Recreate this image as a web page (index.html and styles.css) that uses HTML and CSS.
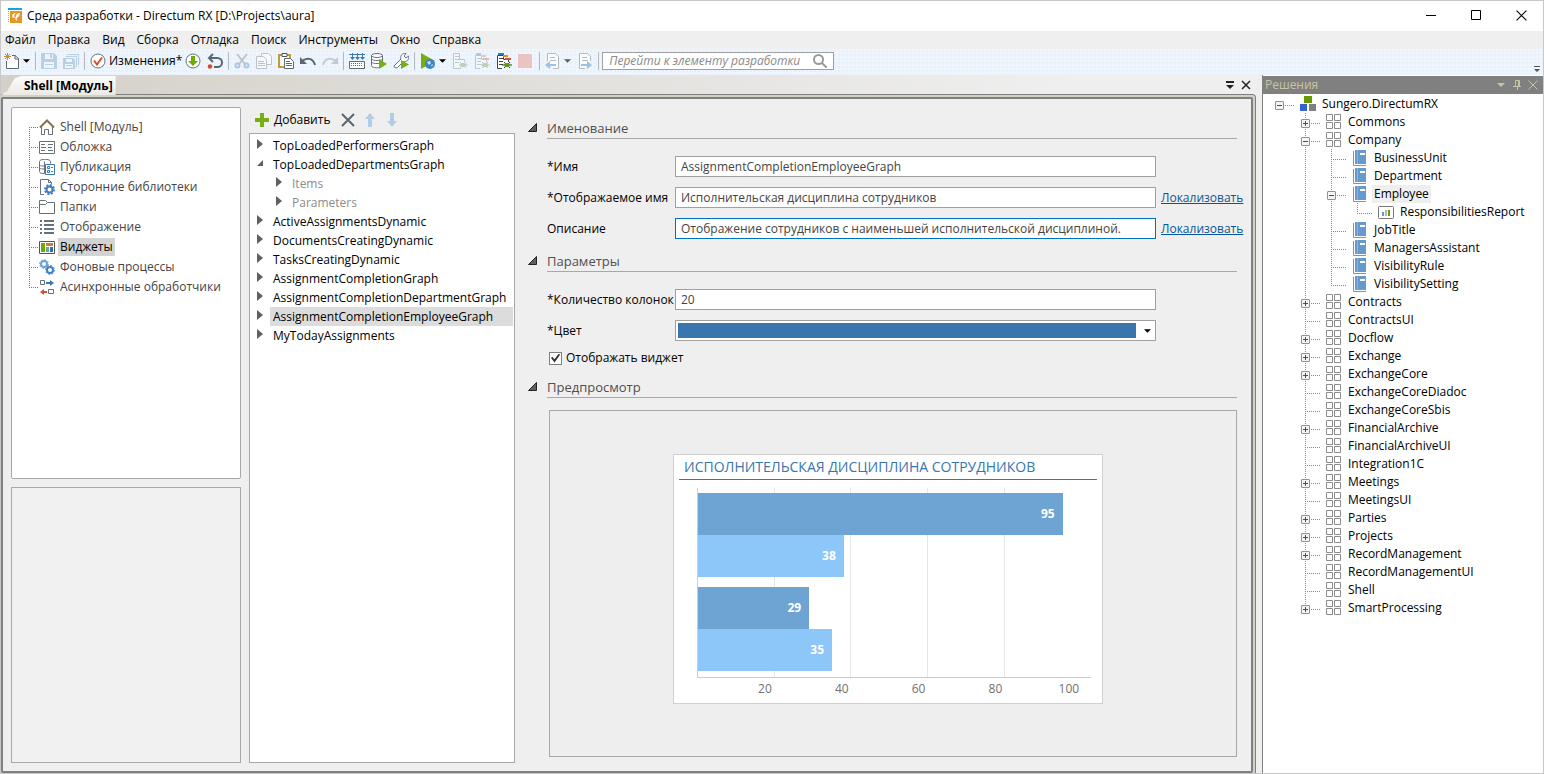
FILE: index.html
```html
<!DOCTYPE html>
<html lang="ru">
<head>
    <meta charset="utf-8">
    <title>Среда разработки - Directum RX</title>
    <link rel="stylesheet" href="styles.css">
</head>
<body>
    <!-- Shared icons -->
    <svg class="sprite" aria-hidden="true">
        <symbol id="module" viewBox="0 0 16 16"><g fill="none" stroke="#8c8c8c"><path d="M.5.5h6v6h-6zM8.500.5h6v6h-6zM.5 8.500h6v6h-6zM8.500 8.500h6v6h-6z"/></g></symbol>
        <symbol id="entity" viewBox="0 0 16 16"><path d="M3 0h11v14H3z" fill="#6699cc"/><path d="M5 0h1v14H5z" fill="#8db4da"/><path d="M8 3h5v2H8z" fill="#fff"/><path d="M1.500 1v14.500H14" fill="none" stroke="#6699cc"/></symbol>
        <symbol id="report" viewBox="0 0 16 16"><rect x=".5" y="2.500" width="15" height="12" rx="1" fill="#fff" stroke="#777"/><path d="M4 8h2v4H4z" fill="#6699cc"/><path d="M7 6h2v6H7z" fill="#b5b5b5"/><path d="M10 6h2v6h-2z" fill="#690"/></symbol>
        <symbol id="caret" viewBox="0 0 8 4"><path d="M0 0h8L4 4z"/></symbol>
        <symbol id="closed" viewBox="0 0 6 10"><path d="M0 0l6 5-6 5z" fill="#606060"/></symbol>
        <symbol id="opened" viewBox="0 0 9 9"><path d="M8.500.5v8h-8z" fill="#606060" stroke="#222"/></symbol>
        <symbol id="opened-small" viewBox="0 0 6 10"><path d="M6 2v6H0z" fill="#606060"/></symbol>
        <symbol id="close" viewBox="0 0 10 10"><path d="M.5.5l9 9M9.500.5l-9 9" fill="none" stroke="currentColor"/></symbol>
    </svg>

    <header class="titlebar">
        <svg class="logo" viewBox="0 0 16 16"><path d="M1 0h14v2H1z" fill="#1ba1e2"/><path d="M3 3h12v12H3z" fill="#e8961e"/><path d="M1.500 3v12" stroke="#aaa" stroke-dasharray="1 1"/><path d="M5 8c0-2 2-3 4-3-2 1-2 3-1 5-2 0-3-1-3-2z" fill="#fff"/><path d="M9 8c0-2 2-3 4-3-1 2 0 3-2 4s-1 3-1 4c-2-1-2-3-1-5z" fill="#fff"/></svg>
        <span class="title">Среда разработки - Directum RX [D:\Projects\aura]</span>
        <div class="window-buttons">
            <button aria-label="Свернуть"><svg viewBox="0 0 11 11"><path d="M0 5.500h10" stroke="#000"/></svg></button>
            <button aria-label="Развернуть"><svg viewBox="0 0 11 11"><path d="M.5.5h9v9h-9z" fill="none" stroke="#000"/></svg></button>
            <button aria-label="Закрыть"><svg viewBox="0 0 10 10"><use href="#close"/></svg></button>
        </div>
    </header>

    <nav class="menu">
        <button>Файл</button>
        <button>Правка</button>
        <button>Вид</button>
        <button>Сборка</button>
        <button>Отладка</button>
        <button>Поиск</button>
        <button>Инструменты</button>
        <button>Окно</button>
        <button>Справка</button>
    </nav>

    <div class="toolbar">
        <button class="with-caret" aria-label="Создать">
            <svg class="icon" viewBox="0 0 16 16"><path d="M2.500 8v7.500h12v-10L11 2.500H8" fill="#fff" stroke="#606870"/><path d="M11 2v4h4" fill="none" stroke="#606870"/><path d="M3.500 0v7M0 3.500h7M1 1l5 5M6 1L1 6" stroke="#c88a3c"/></svg>
            <svg class="caret"><use href="#caret"/></svg>
        </button>
        <i class="sep"></i>
        <button class="pale" aria-label="Сохранить"><svg class="icon" viewBox="0 0 16 16"><path d="M0 0h13l3 3v13H0z" fill="#acc6df"/><path d="M4 1h8v5H4zM3 9h10v6H3z" fill="#eef5fd"/><path d="M9 1h2v4H9zM4 11h8v1H4z" fill="#acc6df"/></svg></button>
        <button class="pale" aria-label="Сохранить все"><svg class="icon" viewBox="0 0 16 16"><path d="M4 1.500h11.500V12M2.500 3.500h11V14" fill="none" stroke="#acc6df"/><path d="M0 5h10l2 2v9H0z" fill="#acc6df"/><path d="M3 6h6v3H3zM2 11h8v4H2z" fill="#eef5fd"/><path d="M3 12h6v1H3z" fill="#acc6df"/></svg></button>
        <i class="sep"></i>
        <button class="with-text">
            <svg class="icon" viewBox="0 0 16 16"><circle cx="8" cy="8" r="7" fill="#fff" stroke="#68717a"/><path d="M4 7.500l3 4 5-7" fill="none" stroke="#d2512e" stroke-width="2"/></svg>
            Изменения*
        </button>
        <button aria-label="Получить"><svg class="icon" viewBox="0 0 16 16"><circle cx="8" cy="8" r="7" fill="#fff" stroke="#68717a"/><path d="M6 3h4v5h3l-5 5-5-5h3z" fill="#6cae00"/></svg></button>
        <button aria-label="Отменить изменения"><svg class="icon" viewBox="0 0 16 16"><path d="M2 5h8.500a4.500 4.500 0 010 9H7M6 1L2 5l4 4" fill="none" stroke="#5b6670" stroke-width="2"/><circle cx="3" cy="13.500" r="2.200" fill="#d9482b"/></svg></button>
        <i class="sep"></i>
        <button aria-label="Вырезать"><svg class="icon" viewBox="0 0 16 16"><path d="M3 1l8 10M13 1L5 11" fill="none" stroke="#bcc3c9" stroke-width="2"/><g fill="none" stroke="#acc6df" stroke-width="2"><circle cx="3.500" cy="12.500" r="2"/><circle cx="12.500" cy="12.500" r="2"/></g></svg></button>
        <button aria-label="Копировать"><svg class="icon" viewBox="0 0 16 16"><g fill="#f6f9fd" stroke="#bcc3c9"><path d="M5.500.5h7l3 3v8h-10z"/><path d="M.5 3.500h7l3 3v9H.5zM2 8.500h6M2 10.500h7M2 12.500h7"/></g></svg></button>
        <button aria-label="Вставить"><svg class="icon" viewBox="0 0 16 16"><path d="M1 2h11v12H1z" fill="#fff" stroke="#c39a34" stroke-width="2"/><path d="M4 .5h5v3H4z" fill="#fff" stroke="#555"/><path d="M6.500 5.500h6l3 3v7h-9z" fill="#fff" stroke="#606870"/><path d="M8 8.500h4M8 10.500h6M8 12.500h6" stroke="#606870"/></svg></button>
        <button aria-label="Отменить"><svg class="icon" viewBox="0 0 16 16"><path d="M2 8c5-4 11-3 13 4" fill="none" stroke="#5b6670" stroke-width="2"/><path d="M0 4v7h7z" fill="#5b6670"/></svg></button>
        <button aria-label="Повторить"><svg class="icon" viewBox="0 0 16 16"><path d="M14 8C9 4 3 5 1 12" fill="none" stroke="#c3c9cf" stroke-width="2"/><path d="M16 4v7H9z" fill="#c3c9cf"/></svg></button>
        <i class="sep"></i>
        <button aria-label="Собрать"><svg class="icon" viewBox="0 0 16 16"><path d="M3.500 0v5M8.500 0v5M13.500 0v5M0 1.500h16" stroke="#3a78b4"/><path d="M1 4h5L3.500 7zM6 4h5L8.500 7zM11 4h5l-2.500 3z" fill="#3a78b4"/><path d="M.5 8.500h15v7H.5z" fill="#fff" stroke="#606870"/><path d="M2 10.500h12M2 12.500h12" stroke="#606870" stroke-dasharray="1 1"/></svg></button>
        <button aria-label="Обновить базу"><svg class="icon" viewBox="0 0 16 16"><g fill="#fff" stroke="#68717a"><path d="M.5 2.500v10c0 3 10 3 11 0v-10"/><ellipse cx="6" cy="2.500" rx="5.500" ry="2"/><path d="M.5 6c1 2 10 2 11 0M.5 9c1 2 10 2 11 0" fill="none"/></g><path d="M8 6l8 5-8 5z" fill="#76ae14"/></svg></button>
        <button aria-label="Обслуживание"><svg class="icon" viewBox="0 0 16 16"><path d="M1 13l7-7c-1-3 1-6 5-5.500L11 3l2 2 2.500-2c1 4-2 6-5 5.500l-6 6c-2 1-4-.5-3.500-1.500z" fill="#fff" stroke="#68717a"/><path d="M8 7l8 4.500L8 16z" fill="#76ae14"/></svg></button>
        <i class="sep"></i>
        <button class="with-caret" aria-label="Запустить">
            <svg class="icon" viewBox="0 0 16 16"><path d="M1 0l14 8-14 8z" fill="#76ae14"/><circle cx="10" cy="11" r="5" fill="#3d84c6"/><path d="M7 9l3-1 1 2-2 2zM11 12l2-1-1 3z" fill="#cfe4f5"/></svg>
            <svg class="caret"><use href="#caret"/></svg>
        </button>
        <button class="faded" aria-label="Отладка"><svg class="icon" viewBox="0 0 16 16"><path d="M9 15.500H1.500V.5h6v6h5V9" fill="#fff" stroke="#68717a"/><path d="M3 3.500h4M3 6.500h4M3 9.500h4" stroke="#68717a"/><path d="M8 9l6 6M14 9l-6 6M7 12h9" stroke="#5c8c3c"/><ellipse cx="11" cy="12" rx="3" ry="2" fill="#5c8c3c"/></svg></button>
        <button class="faded" aria-label="Отладка службы"><svg class="icon" viewBox="0 0 16 16"><path d="M6 15.500H1.500V2.500h6v4h5V9" fill="#fff" stroke="#68717a"/><path d="M3 5.500h4M3 8.500h4M3 11.500h4" stroke="#68717a"/><path d="M2 0h5v2H2z" fill="#3a78b4"/><path d="M7 2h5v2H7z" fill="#e88b1c"/><path d="M9 5h6v2H9z" fill="#d2512e"/><path d="M8 9l6 6M14 9l-6 6M7 12h9" stroke="#5c8c3c"/><ellipse cx="11" cy="12" rx="3" ry="2" fill="#5c8c3c"/></svg></button>
        <button aria-label="Подключить отладчик"><svg class="icon" viewBox="0 0 16 16"><path d="M6 15.500H1.500V2.500h6v4h5V9" fill="#fff" stroke="#444"/><path d="M3 5.500h4M3 8.500h4M3 11.500h4" stroke="#444"/><path d="M2 0h6v2H2z" fill="#3a78b4"/><path d="M7 2h5v2H7z" fill="#e88b1c"/><path d="M9 5h6v2H9z" fill="#d2512e"/><path d="M8 9l6 6M14 9l-6 6M6 12h10" stroke="#2f3f22"/><ellipse cx="11" cy="12" rx="3" ry="2" fill="#5c9c1c"/></svg></button>
        <button aria-label="Остановить"><svg class="icon" viewBox="0 0 16 16"><path d="M0 1h14v14H0z" fill="#e9c4c1"/></svg></button>
        <i class="sep"></i>
        <button class="with-caret dim" aria-label="Назад">
            <svg class="icon pale" viewBox="0 0 16 16"><path d="M2.500 8V.5h8l3 3v12H8M5 4.500h5M5 7.500h6" fill="#fff" stroke="#a5abb1"/><path d="M0 12l5-4v3h6v2H5v3z" fill="#91b4d8"/></svg>
            <svg class="caret"><use href="#caret"/></svg>
        </button>
        <button aria-label="Вперед"><svg class="icon pale" viewBox="0 0 16 16"><path d="M8 15.500H2.500V.5h8l3 3V8M5 4.500h5M5 7.500h6" fill="#fff" stroke="#a5abb1"/><path d="M15 12l-5-4v3H4v2h6v3z" fill="#91b4d8"/></svg></button>
        <i class="sep"></i>
        <label class="search">
            <input type="text" placeholder="Перейти к элементу разработки" aria-label="Перейти к элементу разработки">
            <svg viewBox="0 0 14 14"><circle cx="5.500" cy="5.500" r="4.500" fill="none" stroke="#9a9a9a" stroke-width="2"/><path d="M9 9l5 5" stroke="#9a9a9a" stroke-width="2"/></svg>
        </label>
        <svg class="overflow" viewBox="0 0 6 7"><path d="M0 0h6v1H0zM0 3h6L3 6z" fill="#555"/></svg>
    </div>

    <div class="workspace">
        <section class="document">
            <div class="tabs">
                <button class="tab">Shell [Модуль]</button>
                <div class="tab-buttons">
                    <button aria-label="Список окон"><svg viewBox="0 0 10 10"><path d="M1 1h8v2H1zM1 5h8L5 9z" fill="#222"/></svg></button>
                    <button aria-label="Закрыть"><svg viewBox="0 0 10 10"><path d="M1 1l8 8M9 1L1 9" stroke="#222" stroke-width="1.500"/></svg></button>
                </div>
            </div>
            <div class="frame">
                <div class="editor">
                    <div class="side">
                        <div class="box nav-box">
                            <ul class="nav-tree">
                                <li><svg class="icon" viewBox="0 0 16 16"><path d="M2.500 8v7.500h3v-5h4v5h4V8" fill="#fff" stroke="#68717a"/><path d="M1 8.500l7-7 7 7" fill="none" stroke="#86704a" stroke-width="2"/></svg><a href="#">Shell [Модуль]</a></li>
                                <li><svg class="icon" viewBox="0 0 16 16"><path d="M.5 2.500h15v12H.5z" fill="#fff" stroke="#68717a"/><path d="M2 5.500h4M2 8.500h5M2 11.500h4M9 5.500h5M9 8.500h4M9 11.500h5" stroke="#68717a"/></svg><a href="#">Обложка</a></li>
                                <li><svg class="icon" viewBox="0 0 16 16"><path d="M.5 2.500v10c0 2 3 2 5 2V2.500M.5 6c1 1 3 1 5 1M.5 9c1 1 3 1 5 1M.5 2.500c0-3 11-3 11 0v2" fill="none" stroke="#68717a"/><path d="M6.500 5.500h9v10h-9z" fill="#fff" stroke="#3a78b4"/><path d="M8.500 7.500h2v2h-2zM8.500 11.500h2v2h-2zM12 8.500h2M12 12.500h2" fill="none" stroke="#3a78b4"/></svg><a href="#">Публикация</a></li>
                                <li><svg class="icon" viewBox="0 0 16 16"><path d="M5 15.500H1.500V.5h8l3 3V5M9.500.5v3h3" fill="#fff" stroke="#68717a"/><circle cx="10.500" cy="10.500" r="4.500" fill="none" stroke="#3d7fc0" stroke-width="2" stroke-dasharray="2 1.500"/><circle cx="10.500" cy="10.500" r="3" fill="none" stroke="#3d7fc0" stroke-width="2"/></svg><a href="#">Сторонние библиотеки</a></li>
                                <li><svg class="icon" viewBox="0 0 16 16"><path d="M.5 14.500v-13h6l2 2h7v11zM.5 5.500h6l2-2" fill="#fff" stroke="#68717a"/></svg><a href="#">Папки</a></li>
                                <li><svg class="icon" viewBox="0 0 16 16"><path d="M1 2h2M1 6h2M1 10h2M1 14h2M5 2h10M5 6h10M5 10h10M5 14h10" stroke="#68717a" stroke-width="2"/></svg><a href="#">Отображение</a></li>
                                <li><svg class="icon" viewBox="0 0 16 16"><path d="M.5 2.500h15v12H.5z" fill="#fff" stroke="#555"/><path d="M2 4h4v9H2z" fill="#6cae00"/><path d="M7 4h7v3H7z" fill="#ce7f2e"/><path d="M7 8h3v5H7z" fill="#6aa5a0"/><path d="M11 8h3v5h-3z" fill="#2e6fae"/></svg><a href="#" class="selected">Виджеты</a></li>
                                <li><svg class="icon" viewBox="0 0 16 16"><circle cx="5" cy="5" r="3" fill="none" stroke="#6aa2d8" stroke-width="2"/><circle cx="5" cy="5" r="4.500" fill="none" stroke="#6aa2d8" stroke-dasharray="1.500 2"/><circle cx="11" cy="11" r="3" fill="none" stroke="#3d7fc0" stroke-width="2"/><circle cx="11" cy="11" r="4.500" fill="none" stroke="#3d7fc0" stroke-dasharray="1.500 2"/></svg><a href="#">Фоновые процессы</a></li>
                                <li><svg class="icon" viewBox="0 0 16 16"><path d="M1.500 1.500h4v4h-4zM9.500 10.500h5v4h-5z" fill="#fff" stroke="#68717a"/><path d="M7 3h4V1l4 3-4 3V5H7z" fill="#3a78b4"/><path d="M8 12H5v-2l-4 3 4 3v-2h3z" fill="#d2512e"/></svg><a href="#">Асинхронные обработчики</a></li>
                            </ul>
                        </div>
                        <div class="box empty-box"></div>
                    </div>

                    <div class="widgets">
                        <div class="actions">
                            <button class="add"><svg viewBox="0 0 14 14"><path d="M5 0h4v5h5v4H9v5H5V9H0V5h5z" fill="#76ae14"/></svg>Добавить</button>
                            <button aria-label="Удалить"><svg viewBox="0 0 14 14"><path d="M1 1l12 12M13 1L1 13" stroke="#5b6670" stroke-width="2"/></svg></button>
                            <button aria-label="Вверх"><svg viewBox="0 0 14 14"><path d="M7 0l5 6H9v8H5V6H2z" fill="#b3cde6"/></svg></button>
                            <button aria-label="Вниз"><svg viewBox="0 0 14 14"><path d="M7 14l5-6H9V0H5v8H2z" fill="#b3cde6"/></svg></button>
                        </div>
                        <ul class="box widget-list">
                            <li><svg class="arrow"><use href="#closed"/></svg><span>TopLoadedPerformersGraph</span></li>
                            <li><svg class="arrow"><use href="#opened-small"/></svg><span>TopLoadedDepartmentsGraph</span></li>
                            <li class="child"><svg class="arrow"><use href="#closed"/></svg><span>Items</span></li>
                            <li class="child"><svg class="arrow"><use href="#closed"/></svg><span>Parameters</span></li>
                            <li><svg class="arrow"><use href="#closed"/></svg><span>ActiveAssignmentsDynamic</span></li>
                            <li><svg class="arrow"><use href="#closed"/></svg><span>DocumentsCreatingDynamic</span></li>
                            <li><svg class="arrow"><use href="#closed"/></svg><span>TasksCreatingDynamic</span></li>
                            <li><svg class="arrow"><use href="#closed"/></svg><span>AssignmentCompletionGraph</span></li>
                            <li><svg class="arrow"><use href="#closed"/></svg><span>AssignmentCompletionDepartmentGraph</span></li>
                            <li><svg class="arrow"><use href="#closed"/></svg><span class="selected">AssignmentCompletionEmployeeGraph</span></li>
                            <li><svg class="arrow"><use href="#closed"/></svg><span>MyTodayAssignments</span></li>
                        </ul>
                    </div>

                    <form class="props">
                        <h2><svg><use href="#opened"/></svg><span>Именование</span></h2>
                        <div class="fields">
                            <label for="name">*Имя</label>
                            <input id="name" type="text" value="AssignmentCompletionEmployeeGraph">
                            <i></i>
                            <label for="display-name">*Отображаемое имя</label>
                            <input id="display-name" type="text" value="Исполнительская дисциплина сотрудников">
                            <a href="#">Локализовать</a>
                            <label for="description">Описание</label>
                            <input id="description" class="active" type="text" value="Отображение сотрудников с наименьшей исполнительской дисциплиной.">
                            <a href="#">Локализовать</a>
                        </div>

                        <h2><svg><use href="#opened"/></svg><span>Параметры</span></h2>
                        <div class="fields">
                            <label for="columns">*Количество колонок</label>
                            <input id="columns" type="text" value="20">
                            <i></i>
                            <label for="color">*Цвет</label>
                            <div class="combo">
                                <select id="color"><option value="#3876ad"></option></select>
                                <svg class="caret"><use href="#caret"/></svg>
                            </div>
                            <i></i>
                        </div>
                        <label class="check"><input type="checkbox" checked>Отображать виджет</label>

                        <h2><svg><use href="#opened"/></svg><span>Предпросмотр</span></h2>
                        <div class="preview">
                            <div class="card">
                                <h3>ИСПОЛНИТЕЛЬСКАЯ ДИСЦИПЛИНА СОТРУДНИКОВ</h3>
                                <div class="plot">
                                    <div class="gridlines"><i></i><i></i><i></i><i></i></div>
                                    <div class="bars">
                                        <div class="bar" style="width: 92.8%">95</div>
                                        <div class="bar light" style="width: 37.1%">38</div>
                                        <div class="bar next" style="width: 28.3%">29</div>
                                        <div class="bar light" style="width: 34.1%">35</div>
                                    </div>
                                </div>
                                <div class="axis"><span>20</span><span>40</span><span>60</span><span>80</span><span>100</span></div>
                            </div>
                        </div>
                    </form>
                </div>
            </div>
        </section>

        <aside class="solutions">
            <div class="panel-head">
                <span>Решения</span>
                <button aria-label="Меню панели"><svg viewBox="0 0 10 10"><path d="M1 3h8L5 7z" fill="currentColor"/></svg></button>
                <button aria-label="Закрепить"><svg viewBox="0 0 10 10"><path d="M3.500 6V.5h4V6M6.500 1v5M1 6.500h8M5.500 7v3" fill="none" stroke="currentColor"/></svg></button>
                <button aria-label="Закрыть"><svg viewBox="0 0 10 10"><use href="#close"/></svg></button>
            </div>
            <ul class="tree">
                <li>
                    <div class="node"><button class="toggle minus" aria-label="Свернуть"></button><svg class="icon" viewBox="0 0 16 16"><path d="M4 0h8v7H4z" fill="#690"/><path d="M0 8h7v7H0z" fill="#36c"/><path d="M9 8h7v7H9z" fill="#808080"/></svg><span>Sungero.DirectumRX</span></div>
                    <ul>
                        <li><div class="node"><button class="toggle" aria-label="Развернуть"></button><svg class="icon"><use href="#module"/></svg><span>Commons</span></div></li>
                        <li>
                            <div class="node"><button class="toggle minus" aria-label="Свернуть"></button><svg class="icon"><use href="#module"/></svg><span>Company</span></div>
                            <ul>
                                <li><div class="node"><svg class="icon"><use href="#entity"/></svg><span>BusinessUnit</span></div></li>
                                <li><div class="node"><svg class="icon"><use href="#entity"/></svg><span>Department</span></div></li>
                                <li>
                                    <div class="node"><button class="toggle minus" aria-label="Свернуть"></button><svg class="icon"><use href="#entity"/></svg><span class="selected">Employee</span></div>
                                    <ul>
                                        <li><div class="node"><svg class="icon"><use href="#report"/></svg><span>ResponsibilitiesReport</span></div></li>
                                    </ul>
                                </li>
                                <li><div class="node"><svg class="icon"><use href="#entity"/></svg><span>JobTitle</span></div></li>
                                <li><div class="node"><svg class="icon"><use href="#entity"/></svg><span>ManagersAssistant</span></div></li>
                                <li><div class="node"><svg class="icon"><use href="#entity"/></svg><span>VisibilityRule</span></div></li>
                                <li><div class="node"><svg class="icon"><use href="#entity"/></svg><span>VisibilitySetting</span></div></li>
                            </ul>
                        </li>
                        <li><div class="node"><button class="toggle" aria-label="Развернуть"></button><svg class="icon"><use href="#module"/></svg><span>Contracts</span></div></li>
                        <li><div class="node"><svg class="icon"><use href="#module"/></svg><span>ContractsUI</span></div></li>
                        <li><div class="node"><button class="toggle" aria-label="Развернуть"></button><svg class="icon"><use href="#module"/></svg><span>Docflow</span></div></li>
                        <li><div class="node"><button class="toggle" aria-label="Развернуть"></button><svg class="icon"><use href="#module"/></svg><span>Exchange</span></div></li>
                        <li><div class="node"><button class="toggle" aria-label="Развернуть"></button><svg class="icon"><use href="#module"/></svg><span>ExchangeCore</span></div></li>
                        <li><div class="node"><svg class="icon"><use href="#module"/></svg><span>ExchangeCoreDiadoc</span></div></li>
                        <li><div class="node"><svg class="icon"><use href="#module"/></svg><span>ExchangeCoreSbis</span></div></li>
                        <li><div class="node"><button class="toggle" aria-label="Развернуть"></button><svg class="icon"><use href="#module"/></svg><span>FinancialArchive</span></div></li>
                        <li><div class="node"><svg class="icon"><use href="#module"/></svg><span>FinancialArchiveUI</span></div></li>
                        <li><div class="node"><svg class="icon"><use href="#module"/></svg><span>Integration1C</span></div></li>
                        <li><div class="node"><button class="toggle" aria-label="Развернуть"></button><svg class="icon"><use href="#module"/></svg><span>Meetings</span></div></li>
                        <li><div class="node"><svg class="icon"><use href="#module"/></svg><span>MeetingsUI</span></div></li>
                        <li><div class="node"><button class="toggle" aria-label="Развернуть"></button><svg class="icon"><use href="#module"/></svg><span>Parties</span></div></li>
                        <li><div class="node"><button class="toggle" aria-label="Развернуть"></button><svg class="icon"><use href="#module"/></svg><span>Projects</span></div></li>
                        <li><div class="node"><button class="toggle" aria-label="Развернуть"></button><svg class="icon"><use href="#module"/></svg><span>RecordManagement</span></div></li>
                        <li><div class="node"><svg class="icon"><use href="#module"/></svg><span>RecordManagementUI</span></div></li>
                        <li><div class="node"><svg class="icon"><use href="#module"/></svg><span>Shell</span></div></li>
                        <li><div class="node"><button class="toggle" aria-label="Развернуть"></button><svg class="icon"><use href="#module"/></svg><span>SmartProcessing</span></div></li>
                    </ul>
                </li>
            </ul>
        </aside>
    </div>
</body>
</html>
```
FILE: styles.css
```css
* { box-sizing: border-box; }
body { margin: 0; min-height: 100vh; display: flex; flex-direction: column; border: 1px solid #c8c8c8; background: #efefef; font: 12px/18px "Open Sans", "Noto Sans", sans-serif; color: #000; }
button, input, select { font: inherit; color: inherit; margin: 0; }
button { display: flex; align-items: center; padding: 0; border: none; background: none; }
ul { list-style: none; margin: 0; padding: 0; }
svg { display: block; flex: none; }
.sprite { display: none; }
.icon { width: 16px; height: 16px; }
.caret { width: 7px; height: 4px; }
.pale { opacity: 0.8; }
.faded { opacity: 0.35; }
.dim .caret { opacity: 0.6; }

.titlebar { display: flex; align-items: center; height: 30px; padding: 0 16px 1px 6px; background: #fff; }
.logo { width: 16px; height: 16px; margin-right: 4px; }
.title { flex: 1; }
.window-buttons { display: flex; gap: 34px; }
.window-buttons svg { width: 11px; height: 11px; }

.menu { display: flex; gap: 12px; height: 18px; padding-left: 4px; }

.toolbar { display: flex; align-items: center; gap: 6px; height: 26px; padding: 0 3px 2px; background: #eef5fd radial-gradient(#e6effa 1px, transparent 1px) 0 0 / 4px 4px; }
.with-caret { gap: 3px; }
.with-text { gap: 3px; margin-right: -3px; }
.sep { width: 1px; height: 18px; margin: 0 -1px; background: #b4b8bc; }
.search { display: flex; align-items: center; width: 232px; height: 18px; margin-left: -2px; padding: 0 6px; border: 1px solid #a0a0a0; background: #fff; }
.search input { flex: 1; min-width: 0; padding: 0; border: none; outline: none; background: none; font-style: italic; }
.search input::placeholder { color: #8a8a8a; }
.search svg { width: 14px; height: 14px; }
.overflow { width: 6px; height: 7px; margin-left: auto; align-self: flex-end; }

.workspace { flex: 1; display: flex; gap: 6px; }
.document { flex: 1; display: flex; flex-direction: column; }
.tabs { display: flex; justify-content: space-between; height: 19px; background: linear-gradient(90deg, #d4d0c8, #efefef 85%); }
.tab { height: 19px; margin-top: 1px; padding: 0 3px 0 23px; background: linear-gradient(#fcfcfb, #ebe9e4); clip-path: polygon(0 100%, 6px 80%, 14px 10%, 20px 0, 100% 0, 100% 100%); font-weight: bold; }
.tab-buttons { display: flex; align-items: center; gap: 6px; padding-right: 5px; }
.tab-buttons svg { width: 10px; height: 10px; }
.frame { flex: 1; display: flex; padding: 2px 2px 0 0; border: 1px solid #808080; border-width: 1px 1px 0 0; border-top-right-radius: 4px; background: #d4d0c8; }
.editor { flex: 1; display: flex; gap: 8px; padding: 8px 14px 8px 8px; border: 2px solid #808080; border-radius: 2px; background: #efefef; }
.box { border: 1px solid #a8a8a8; background: #fff; }

.side { width: 230px; display: flex; flex-direction: column; gap: 8px; color: #444; }
.nav-box { flex: 361; padding: 9px 0 0 17px; border-radius: 2px; }
.empty-box { flex: 274; background: #f1f1f1; }
.nav-tree li { display: flex; align-items: center; height: 20px; padding-left: 10px; background: repeating-linear-gradient(#777 0 1px, transparent 1px 2px) 0 0 / 1px 100% no-repeat, repeating-linear-gradient(90deg, #777 0 1px, transparent 1px 2px) 0 10px / 10px 1px no-repeat; }
.nav-tree li:first-child { background-position: 0 10px, 0 10px; }
.nav-tree li:last-child { background-size: 1px 10px, 10px 1px; }
.nav-tree a { margin-left: 3px; padding: 0 2px; color: inherit; text-decoration: none; }
.nav-tree .selected { background: #d3d3d3; color: #000; }

.widgets { width: 266px; display: flex; flex-direction: column; }
.actions { display: flex; align-items: center; gap: 8px; height: 26px; padding-left: 6px; }
.actions svg { width: 14px; height: 14px; }
.add { gap: 5px; margin-right: 3px; }
.widget-list { flex: 1; padding: 2px 1px 0 7px; }
.widget-list li { display: flex; line-height: 19px; }
.widget-list .arrow { width: 6px; height: 10px; margin: 3px 7px 0 0; }
.widget-list span { flex: 1; padding-left: 3px; }
.widget-list .child { padding-left: 19px; color: #8c8c8c; }
.selected { background: #dcdcdc; }

.props { flex: 1; display: flex; flex-direction: column; padding-left: 4px; }
.props h2 { display: flex; align-items: flex-start; margin: 0; padding-top: 12px; font-size: 13px; line-height: 19px; font-weight: normal; color: #505050; }
.props h2 svg { width: 9px; height: 9px; margin: 4px 10px 0 1px; }
.props h2 span { flex: 1; border-bottom: 1px solid #a8a8a8; }
.fields { display: grid; grid-template-columns: 128px 1fr 81px; gap: 10px 0; align-items: center; margin-left: 20px; padding-top: 17px; }
.fields + h2 { padding-top: 13px; }
.fields label { white-space: nowrap; }
.fields input { width: 100%; height: 21px; padding: 0 5px; border: 1px solid #a0a0a0; outline: none; background: #fff; color: #444; }
.fields input.active { border-color: #0070c0; }
.fields a { padding-left: 5px; color: #0a5595; }
.combo { display: grid; align-items: center; }
.combo select { grid-area: 1 / 1; width: 100%; height: 21px; padding: 2px 19px 2px 2px; border: 1px solid #a0a0a0; border-radius: 0; appearance: none; background: linear-gradient(#3876ad, #3876ad) content-box, #fff; }
.combo .caret { grid-area: 1 / 1; justify-self: end; margin-right: 5px; pointer-events: none; }
.check { display: flex; align-items: center; gap: 4px; margin-left: 22px; padding-top: 8px; }
.check input { display: grid; place-items: center; width: 13px; height: 13px; border: 1px solid #808080; appearance: none; background: #fff; }
.check input:checked::before { content: ""; width: 9px; height: 9px; background: #333; clip-path: polygon(0 50%, 14% 35%, 38% 65%, 88% 0, 100% 15%, 40% 100%); }
.check + h2 { padding-top: 11px; }

.preview { flex: 1; display: flex; align-items: center; justify-content: center; margin: 12px 0 6px 22px; padding: 0 10px 10px 0; border: 1px solid #a8a8a8; background: #eee; }
.card { width: 430px; height: 250px; padding: 0 5px; border: 1px solid #d0d0d0; background: #fff; }
.card h3 { margin: 0 0 8px; padding: 0 5px; border-bottom: 1px solid #3876ad; font-size: 14px; line-height: 24px; font-weight: normal; color: #3876ad; }
.plot { display: grid; height: 190px; margin: 0 6px 0 18px; border: 1px solid #ccc; border-width: 0 0 1px 1px; }
.gridlines, .bars { grid-area: 1 / 1; }
.gridlines { display: flex; }
.gridlines i { width: 19.5%; border-right: 1px solid #e6e6e6; }
.bars { padding-top: 5px; }
.bar { height: 42px; padding-right: 8px; background: #6ea4d4; color: #fff; font-weight: bold; line-height: 42px; text-align: right; }
.bar.light { background: #8dc6f8; }
.bar.next { margin-top: 10px; }
.axis { display: flex; margin: 2px 6px 0 18px; color: #707070; }
.axis span { width: 19.5%; padding-right: 2px; text-align: right; }

.solutions { width: 281px; padding-top: 1px; border-left: 1px solid #808080; background: #fff; }
.panel-head { display: flex; align-items: center; gap: 6px; height: 18px; padding: 0 5px 0 2px; background: #808080; color: #c8c5a0; }
.panel-head span { flex: 1; }
.panel-head svg { width: 10px; height: 10px; }
.tree { padding: 1px 0 0 12px; }
.tree ul { margin-left: 26px; }
.tree ul li { background: repeating-linear-gradient(#888 0 1px, transparent 1px 2px) 4px 0 / 1px 100% no-repeat; }
.tree ul li:last-child { background-size: 1px 10px; }
.node { display: flex; align-items: center; height: 18px; padding-left: 25px; background: repeating-linear-gradient(90deg, #888 0 1px, transparent 1px 2px) 4px 10px / 15px 1px no-repeat; }
.node span { margin-left: 4px; padding: 0 2px; }
.tree .selected { background: #efefef; }
.toggle { width: 9px; height: 9px; margin: 2px 16px 0 -25px; border: 1px solid #909090; border-radius: 1px; background: linear-gradient(#2f4f8f, #2f4f8f) center / 5px 1px no-repeat, linear-gradient(#2f4f8f, #2f4f8f) center / 1px 5px no-repeat, #f4f4f4; }
.toggle.minus { background: linear-gradient(#2f4f8f, #2f4f8f) center / 5px 1px no-repeat, #f4f4f4; }
```
